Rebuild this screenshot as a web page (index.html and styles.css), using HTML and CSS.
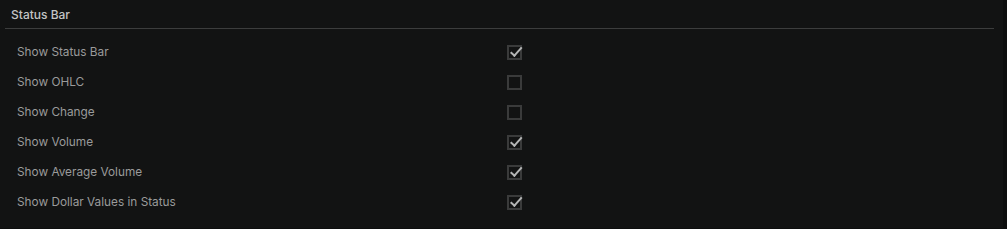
FILE: index.html
```html
<!doctype html>
<html>
	<head>
		<title>Status Bar</title>
		<link rel="stylesheet" href="styles.css">
	</head>
	<body>
		<section class="panel">
			<h2 class="panel-title">Status Bar</h2>
			<div class="rows">
				<label class="row"><span>Show Status Bar</span><span class="box checked"></span></label>
				<label class="row"><span>Show OHLC</span><span class="box"></span></label>
				<label class="row"><span>Show Change</span><span class="box"></span></label>
				<label class="row"><span>Show Volume</span><span class="box checked"></span></label>
				<label class="row"><span>Show Average Volume</span><span class="box checked"></span></label>
				<label class="row"><span>Show Dollar Values in Status</span><span class="box checked"></span></label>
			</div>
		</section>
	</body>
</html>
```

FILE: styles.css
```css
html, body {
	margin: 0;
	height: 100%;
	background: #0d0e0e;
}

body {
	font-family: Inter, "Noto Sans", sans-serif;
	font-size: 11.8px;
	color: #9a9b9b;
}

	.panel {
		height: 228px;
		margin-right: 4px;
		padding-top: 1px;
		background: #121313;
		box-sizing: border-box;
	}

	.panel-title {
		margin: 0 9px 0 5px;
		padding: 6px 0 0 6px;
		height: 21px;
		font-size: 12px;
		font-weight: 500;
		color: #c3c4c4;
		line-height: 16px;
		border-bottom: 1px solid #3c3d3d;
	}

	.rows {
		padding-top: 8px;
	}

	.row {
		display: flex;
		align-items: center;
		height: 30px;
		padding-left: 17px;
	}

	.row span:first-child {
		width: 490px;
	}

	.box {
		position: relative;
		width: 11px;
		height: 11px;
		border: 2px solid #3a3b3b;
	}

	.box.checked:after {
		content: "";
		position: absolute;
		top: 6px;
		left: 1px;
		width: 10px;
		height: 4px;
		border-left: 2px solid #b4b5b5;
		border-bottom: 2px solid #b4b5b5;
		transform: rotate(-48deg);
		transform-origin: left top;
	}
```
